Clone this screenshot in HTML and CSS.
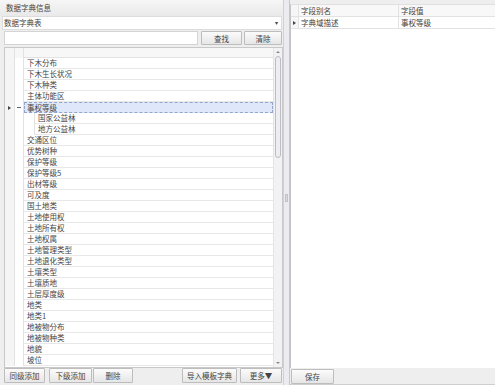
FILE: index.html
```html
<!DOCTYPE html>
<html>
<head>
<meta charset="utf-8">
<link rel="stylesheet" href="styles.css">
</head>
<body>
<div class="app">
  <div class="left">
    <div class="title">数据字典信息</div>
    <div class="combo"><span>数据字典表</span><span class="arrow">▾</span></div>
    <div class="search">
      <div class="search-input"></div>
      <div class="btn btn-find">查找</div>
      <div class="btn btn-clear">清除</div>
    </div>
    <div class="tree">
      <div class="tree-body">
        <div class="row head"><div class="ind"></div><div class="exp"></div><div class="cell"></div></div>
        <div class="row"><div class="ind"></div><div class="exp"></div><div class="cell">下木分布</div></div>
        <div class="row"><div class="ind"></div><div class="exp"></div><div class="cell">下木生长状况</div></div>
        <div class="row"><div class="ind"></div><div class="exp"></div><div class="cell">下木种类</div></div>
        <div class="row"><div class="ind"></div><div class="exp"></div><div class="cell">主体功能区</div></div>
        <div class="row sel"><div class="ind"><span class="tri"></span></div><div class="exp"><span class="minus"></span></div><div class="cell">事权等级</div></div>
        <div class="row child"><div class="ind"></div><div class="exp"></div><div class="pad"></div><div class="cell">国家公益林</div></div>
        <div class="row child"><div class="ind"></div><div class="exp"></div><div class="pad"></div><div class="cell">地方公益林</div></div>
        <div class="row"><div class="ind"></div><div class="exp"></div><div class="cell">交通区位</div></div>
        <div class="row"><div class="ind"></div><div class="exp"></div><div class="cell">优势树种</div></div>
        <div class="row"><div class="ind"></div><div class="exp"></div><div class="cell">保护等级</div></div>
        <div class="row"><div class="ind"></div><div class="exp"></div><div class="cell">保护等级5</div></div>
        <div class="row"><div class="ind"></div><div class="exp"></div><div class="cell">出材等级</div></div>
        <div class="row"><div class="ind"></div><div class="exp"></div><div class="cell">可及度</div></div>
        <div class="row"><div class="ind"></div><div class="exp"></div><div class="cell">国土地类</div></div>
        <div class="row"><div class="ind"></div><div class="exp"></div><div class="cell">土地使用权</div></div>
        <div class="row"><div class="ind"></div><div class="exp"></div><div class="cell">土地所有权</div></div>
        <div class="row"><div class="ind"></div><div class="exp"></div><div class="cell">土地权属</div></div>
        <div class="row"><div class="ind"></div><div class="exp"></div><div class="cell">土地管理类型</div></div>
        <div class="row"><div class="ind"></div><div class="exp"></div><div class="cell">土地退化类型</div></div>
        <div class="row"><div class="ind"></div><div class="exp"></div><div class="cell">土壤类型</div></div>
        <div class="row"><div class="ind"></div><div class="exp"></div><div class="cell">土壤质地</div></div>
        <div class="row"><div class="ind"></div><div class="exp"></div><div class="cell">土层厚度级</div></div>
        <div class="row"><div class="ind"></div><div class="exp"></div><div class="cell">地类</div></div>
        <div class="row"><div class="ind"></div><div class="exp"></div><div class="cell">地类1</div></div>
        <div class="row"><div class="ind"></div><div class="exp"></div><div class="cell">地被物分布</div></div>
        <div class="row"><div class="ind"></div><div class="exp"></div><div class="cell">地被物种类</div></div>
        <div class="row"><div class="ind"></div><div class="exp"></div><div class="cell">地貌</div></div>
        <div class="row"><div class="ind"></div><div class="exp"></div><div class="cell">坡位</div></div>
      </div>
      <div class="vscroll">
        <div class="sarrow up"></div>
        <div class="thumb"></div>
        <div class="track"></div>
        <div class="sarrow down"></div>
      </div>
    </div>
    <div class="actions">
      <div class="btn b1">同级添加</div>
      <div class="btn b2">下级添加</div>
      <div class="btn b3">删除</div>
      <div class="spacer"></div>
      <div class="btn b4">导入模板字典</div>
      <div class="btn b5">更多▼</div>
    </div>
  </div>
  <div class="splitter"><div class="grip"></div></div>
  <div class="right">
    <div class="grid">
      <div class="grow ghead"><div class="gind"></div><div class="gc1">字段别名</div><div class="gc2">字段值</div></div>
      <div class="grow"><div class="gind"><span class="tri"></span></div><div class="gc1">字典域描述</div><div class="gc2">事权等级</div></div>
    </div>
    <div class="ractions"><div class="btn b-save">保存</div></div>
  </div>
</div>
</body>
</html>
```
FILE: styles.css
```css
* { box-sizing: border-box; }
html, body { margin: 0; padding: 0; }
body {
  width: 495px; height: 385px; overflow: hidden;
  background: #eeeeee;
  font-family: "Noto Sans CJK SC", "Noto Sans", sans-serif;
  font-size: 7.5px;
  color: #444;
}
.app { display: flex; width: 495px; height: 385px; }
.left { width: 283px; display: flex; flex-direction: column; }
.title {
  height: 16px; line-height: 16px; padding-left: 6px;
  background: linear-gradient(#f6f6f6, #e9e9e9);
  color: #444;
}
.combo {
  height: 14px; margin: 0 1px 0 2px; background: #fff;
  border: 1px solid #dcdcdc; display: flex; align-items: center;
  justify-content: space-between; padding: 0 3px 0 1px; line-height: 12px;
}
.combo .arrow { font-size: 6px; color: #444; }
.search { display: flex; height: 14px; margin-top: 1px; padding-left: 4px; }
.search-input { width: 194px; background: #fff; border: 1px solid #d4d4d4; }
.btn {
  height: 14px; display: flex; align-items: center; justify-content: center;
  background: linear-gradient(#fbfbfb, #e6e6e6);
  border: 1px solid #bdbdbd; border-radius: 1px; color: #444;
  white-space: nowrap;
}
.btn-find { width: 41px; margin-left: 3px; }
.btn-clear { width: 38px; margin-left: 2px; }
.tree {
  margin: 2px 0 0 4px; height: 321px; width: 279px;
  border: 1px solid #c8c8c8; background: #fff; display: flex;
}
.tree-body { flex: 1; overflow: hidden; background: #fff; }
.row { display: flex; height: 11px; line-height: 10px; }
.row.head { height: 10px; background: #f7f7f7; }
.row.head .cell { border-bottom: 1px solid #e2e2e2; }
.ind { width: 10px; border-right: 1px solid #e2e2e2; background: #f5f5f5; display: flex; align-items: center; justify-content: center; }
.exp { width: 9px; border-right: 1px solid #e2e2e2; display: flex; align-items: center; justify-content: center; }
.pad { width: 11px; border-right: 1px solid #e2e2e2; }
.cell { flex: 1; padding-left: 3px; border-bottom: 1px solid #e8e8e8; white-space: nowrap; }
.row.sel .cell { background: #dfe8fa; border: 1px dashed #93a5c8; line-height: 9px; padding-left: 2px; }
.tri { width: 0; height: 0; border-left: 3px solid #444; border-top: 2.5px solid transparent; border-bottom: 2.5px solid transparent; }
.minus { width: 4px; height: 1px; background: #666; }
.vscroll { width: 9px; background: #f2f2f5; border-left: 1px solid #e4e4e8; display: flex; flex-direction: column; align-items: center; }
.sarrow { width: 0; height: 0; margin: 3px 0; border-left: 2px solid transparent; border-right: 2px solid transparent; }
.sarrow.up { border-bottom: 2px solid #888; }
.sarrow.down { border-top: 2px solid #888; margin-top: 0; }
.thumb { width: 6px; height: 102px; border: 1px solid #bcbcc5; border-radius: 3px; background: #eeeef2; }
.track { flex: 1; }
.actions { display: flex; padding: 0 1px 0 4px; height: 17px; align-items: flex-start; }
.actions .btn { height: 15px; }
.b1 { width: 41px; }
.b2 { width: 43px; margin-left: 4px; }
.b3 { width: 40px; margin-left: 1px; }
.spacer { flex: 1; }
.b4 { width: 55px; }
.b5 { width: 42px; margin-left: 3px; }
.splitter {
  width: 7px; border-left: 1px solid #d0d0d6; border-right: 1px solid #c6c6cc;
  background: #ececf0; display: flex; align-items: center; justify-content: center;
}
.grip { width: 3px; height: 8px; background: #d8d8de; border: 1px solid #c2c2c8; margin-top: 10px; }
.right { flex: 1; display: flex; flex-direction: column; padding-top: 4px; }
.grid { height: 364px; background: #fff; border-left: 1px solid #c2c2c7; border-top: 1px solid #e0e0e0; }
.grow { display: flex; height: 12px; line-height: 11px; }
.ghead { height: 12px; background: #f8f8f8; }
.gind { width: 8px; border-right: 1px solid #e2e2e2; border-bottom: 1px solid #e2e2e2; display: flex; align-items: center; justify-content: center; background: #f6f6f6; }
.gc1 { width: 100px; padding-left: 2px; border-right: 1px solid #e2e2e2; border-bottom: 1px solid #e2e2e2; }
.gc2 { flex: 1; padding-left: 2px; border-bottom: 1px solid #e2e2e2; }
.ractions { height: 17px; padding: 1px 0 0 1px; display: flex; border-bottom: 1px solid #cfcfcf; }
.b-save { width: 43px; height: 15px; }
```
